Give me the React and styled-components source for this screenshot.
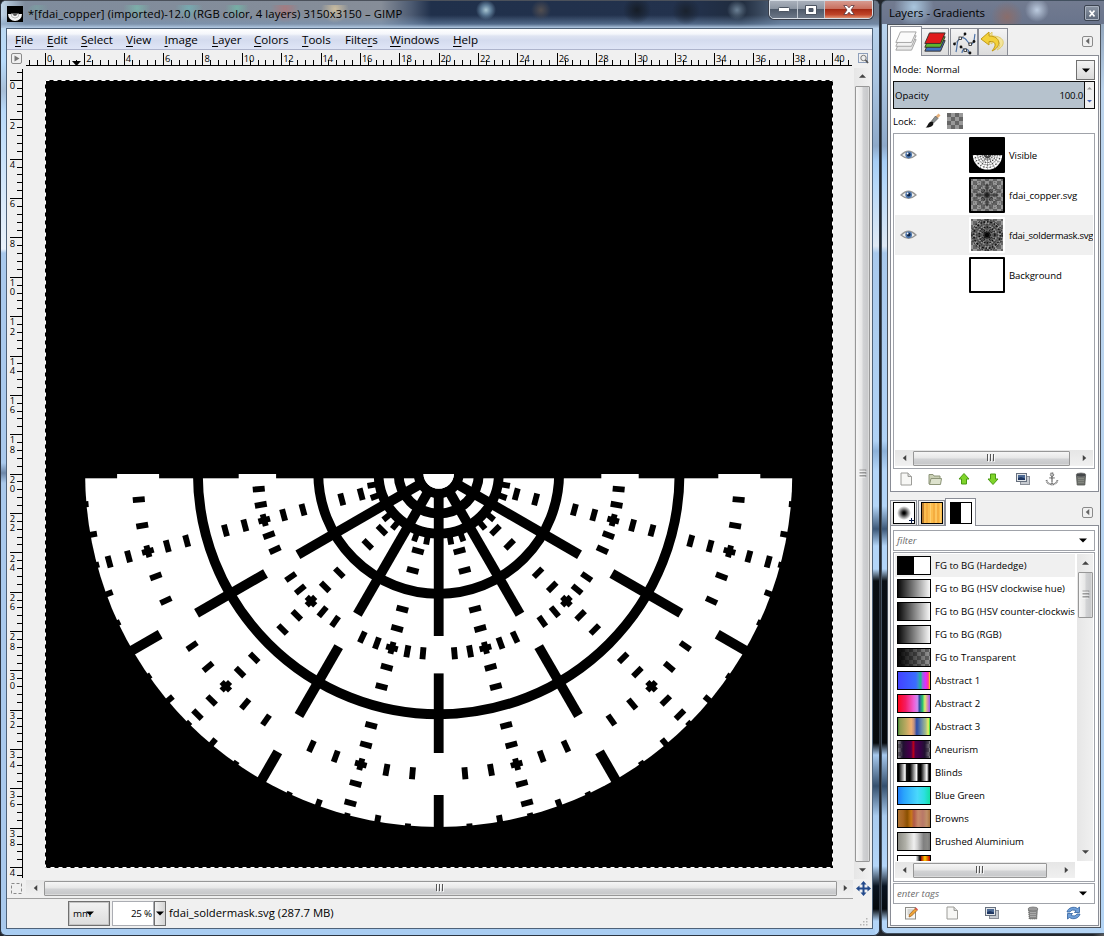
import React from "react";
import styled, { createGlobalStyle } from "styled-components";

const Global = createGlobalStyle`
  * { box-sizing: border-box; }
  html, body { margin: 0; padding: 0; }
  body {
    width: 1104px; height: 936px; overflow: hidden; background: #15171d;
    font-family: "Open Sans", "Noto Sans", sans-serif; color: #000;
  }
  svg { display: block; flex: none; }
`;

const Desktop = styled.div`
  display: flex;
  width: 1104px;
  height: 936px;
  gap: 1px;
  background: linear-gradient(90deg, #22262c 0 99%, #5b5b5b);
`;

/* ---------- window shells ---------- */

const glassSide = `linear-gradient(180deg, #77869c 0, #b8d2ec 24px, #a9c4e0 80px, #8ea9c9 145px, #a6cdf5 160px,
  #b7d8f8 185px, #dfe9f4 245px, #a9c9ec 252px, #b0d2f5 440px, #8db1d8 450px, #b3d5f8 470px, #b3d5f8 505px,
  #3d5878 528px, #b3d5f8 545px, #b3d5f8 568px, #0a0f14 580px, #070a0d 742px, #a7c9ee 754px, #35506e 785px,
  #a9cbee 815px, #b3d5f8 865px, #0a1420 885px, #05090d 908px, #b3d5f8 920px, #b3d5f8 936px)`;

const MainWindow = styled.div`
  width: 880px;
  height: 936px;
  padding: 0 6px 6px 5px;
  border: 1px solid #2c3440;
  border-top-color: #4b515b;
  border-radius: 6px;
  display: flex;
  flex-direction: column;
  background:
    linear-gradient(90deg, #a9cdf2 0 874px, transparent 874px) 0 928px / 100% 7px no-repeat,
    linear-gradient(180deg, #bcd5ec, #b9dcfb 60px, #a8bfd8 90px, #b9dafa 110px, #eaf2fa 248px, #a9c9ec 252px 462px,
      #6d87a8 472px, #a9c9ec 482px) 0 0 / 6px 100% no-repeat,
    ${glassSide} 100% 0 / 7px 100% no-repeat,
    #a9cdf2;
`;

const TitleBar = styled.div`
  height: 27px;
  flex: none;
  margin: 0 -6px 0 -5px;
  padding-left: 6px;
  border-radius: 5px 5px 0 0;
  display: flex;
  align-items: flex-start;
  background:
    radial-gradient(circle at 485px 9px, #a9c6d3 0, #5d7b96 5px, transparent 10px),
    radial-gradient(circle at 736px 9px, #6b8094 0, transparent 10px),
    radial-gradient(circle at 540px 9px, #524e50 0, transparent 10px),
    radial-gradient(circle at 636px 9px, #161d27 0, transparent 14px),
    radial-gradient(circle at 685px 10px, #1a222e 0, transparent 14px),
    linear-gradient(180deg, transparent 14px, rgba(120, 150, 185, 0.55) 23px, #b4cbe4 27px),
    linear-gradient(90deg, #c0d5e8 0, #7f8c9d 24px, #868d98 380px, #4d5b72 410px, #20304b 430px, #23324d 690px,
      #1f2b3d 740px, #55677f 780px, #6a7688 100%);
`;

const AppIcon = styled.svg`
  margin: 5px 0 0 0;
`;

const TitleText = styled.div`
  margin: 4px 0 0 4px;
  padding: 0 4px 0 1px;
  height: 18px;
  line-height: 17px;
  font-size: 11.3px;
  letter-spacing: 0.09px;
  white-space: pre;
  border-radius: 8px;
  background:
    radial-gradient(circle at 10px 3px, rgba(120, 170, 165, 0.5), transparent 12px),
    radial-gradient(circle at 110px 3px, rgba(120, 190, 175, 0.7), transparent 14px),
    radial-gradient(circle at 162px 3px, rgba(110, 190, 190, 0.6), transparent 14px),
    radial-gradient(circle at 210px 3px, rgba(110, 190, 170, 0.7), transparent 12px),
    radial-gradient(circle at 258px 4px, rgba(190, 110, 110, 0.6), transparent 14px),
    radial-gradient(circle at 308px 4px, rgba(220, 200, 160, 0.8), transparent 14px);
`;

const Controls = styled.div`
  display: flex;
  margin: -1px 6px 0 auto;
  width: 104px;
  height: 19px;
  border: 1px solid #d9dfe6;
  border-radius: 0 0 5px 5px;
  overflow: hidden;
  box-shadow: 0 0 0 1px #3a3f4b;
`;

const Control = styled.div`
  width: ${(p) => p.$w}px;
  height: 100%;
  display: flex;
  align-items: center;
  justify-content: center;
  border-right: ${(p) => (p.$close ? "none" : "1px solid #c0c6cf")};
  background: ${(p) =>
    p.$close
      ? "linear-gradient(180deg,#d79b90 0,#c9705f 45%,#a52a14 50%,#c0452a 80%,#e09070 100%)"
      : "linear-gradient(180deg,#a9b0bb 0,#8d96a3 45%,#4f5a6a 50%,#6b7686 100%)"};
`;

const Frame = styled.div`
  width: 867px;
  height: 901px;
  flex: none;
  border: 1px solid #4e6279;
  background: #f0f0f0;
  display: flex;
  flex-direction: column;
`;

const MenuBar = styled.div`
  display: flex;
  height: 21px;
  padding: 1px 0 0 8px;
  border-bottom: 1px solid #aeb4cc;
  background: linear-gradient(180deg, #fff 0, #f4f6fb 5px, #dfe4f2 7px, #d4dbee 11px, #dfe5f6 20px);
`;

const MenuItem = styled.div`
  width: ${(p) => p.$w}px;
  font-size: 11.6px;
  line-height: 19px;
  white-space: nowrap;
  u { text-underline-offset: 2px; text-decoration-thickness: 1px; }
`;

const Workspace = styled.div`
  display: grid;
  grid-template-columns: 19px 828px 18px;
  grid-template-rows: 16px 814px 17px;
`;

const Cell = styled.div`
  display: flex;
  align-items: center;
  justify-content: ${(p) => (p.$start ? "flex-start" : "center")};
`;

const CanvasArea = styled.div`
  padding: 14px 0 0 19px;
  background: #f0f0f0;
`;

/* ---------- scrollbars ---------- */

const Scroll = styled.div`
  display: flex;
  flex-direction: ${(p) => (p.$v ? "column" : "row")};
  align-items: center;
  width: ${(p) => (p.$v ? "16px" : `${p.$len}px`)};
  height: ${(p) => (p.$v ? `${p.$len}px` : "16px")};
  flex: none;
  background: ${(p) => (p.$v ? "linear-gradient(90deg,#e6e6e6,#f0f0f0)" : "linear-gradient(180deg,#e6e6e6,#f0f0f0)")};
`;

const ScrollEnd = styled.div`
  flex: none;
  width: ${(p) => (p.$v ? 16 : p.$s)}px;
  height: ${(p) => (p.$v ? p.$s : 16)}px;
  display: flex;
  align-items: center;
  justify-content: center;
  &:last-child { ${(p) => (p.$v ? "margin-top" : "margin-left")}: auto; }
`;

const Thumb = styled.div`
  flex: none;
  width: ${(p) => (p.$v ? 15 : p.$s)}px;
  height: ${(p) => (p.$v ? p.$s : 15)}px;
  border: 1px solid #979797;
  border-radius: 1px;
  display: flex;
  align-items: center;
  justify-content: center;
  background: ${(p) => (p.$v ? "linear-gradient(90deg" : "linear-gradient(180deg")},
    #f6f6f6 0, #e6e6e6 48%, #d2d3d5 52%, #c8c9cb 88%, #e2e2e2 100%);
`;

const Grip = () => (
  <svg width="9" height="8" viewBox="0 0 9 8">
    {[0.5, 3.5, 6.5].map((x) => (
      <g key={x}>
        <path d={`M${x} 0V7`} stroke="#555" />
        <path d={`M${x + 1} 1V8`} stroke="#fff" opacity="0.8" />
      </g>
    ))}
  </svg>
);
const GripTurn = styled.div`
  transform: rotate(90deg);
`;

const arrows = { l: "M6 0V7L2 3.5Z", r: "M2 0V7L6 3.5Z", u: "M0 5.5H8L4 1.5Z", d: "M0 1.5H8L4 5.5Z" };
const Arrow = ({ dir, fill = "#444", s = 8 }) => (
  <svg width={s} height={(s * 7) / 8} viewBox="0 0 8 7">
    <path d={arrows[dir]} fill={fill} />
  </svg>
);

const ScrollBar = ({ v, len, start, thumb, end }) => (
  <Scroll $v={v} $len={len}>
    <ScrollEnd $v={v} $s={start}><Arrow dir={v ? "u" : "l"} s={7} /></ScrollEnd>
    <Thumb $v={v} $s={thumb}>{v ? <GripTurn><Grip /></GripTurn> : <Grip />}</Thumb>
    <ScrollEnd $v={v} $s={end}><Arrow dir={v ? "d" : "r"} s={7} /></ScrollEnd>
  </Scroll>
);

/* ---------- rulers ---------- */

const STEP = 19.68;
const minor = Array.from({ length: 110 }, (_, i) => i);

const HRuler = () => (
  <svg width="828" height="16" viewBox="26 50 828 16" fontFamily="Open Sans" fontSize="9.4">
    <path d="M26 65.5H852" stroke="#000" />
    {minor.map((i) => {
      const x = Math.floor(45.5 + (i - 2) * STEP * 0.4) + 0.5;
      const big = (i - 2) % 5 === 0;
      return x < 852 ? <path key={i} d={`M${x} ${big ? 53 : 60}V65`} stroke="#000" /> : null;
    })}
    {Array.from({ length: 21 }, (_, k) => (
      <text key={k} x={47 + k * STEP * 2} y="62.3" letterSpacing="-0.2">{k * 2}</text>
    ))}
    <path d="M72 61H81L76.500 66Z" />
  </svg>
);

const VRuler = () => (
  <svg width="19" height="814" viewBox="7 66 19 814" fontFamily="Open Sans" fontSize="9.4">
    <path d="M22.500 69V878" stroke="#000" />
    {minor.map((i) => {
      const y = Math.floor(80.5 + (i - 1) * STEP * 0.4) + 0.5;
      const big = (i - 1) % 5 === 0;
      return y < 878 ? <path key={i} d={`M${big ? 10 : 17} ${y}H22`} stroke="#000" /> : null;
    })}
    {Array.from({ length: 21 }, (_, k) =>
      String(k * 2).split("").map((c, j) => (
        <text key={`${k}-${j}`} x="9.7" y={89.2 + k * STEP * 2 + j * 9.3}>{c}</text>
      ))
    )}
    <rect x="7" y="879" width="15" height="2" fill="#f0f0f0" />
  </svg>
);

/* ---------- radial artwork ---------- */

const PITCH = 20.07;
const Dash = ({ a, r, w, h }) => (
  <rect x={r - w / 2} y={-h / 2} width={w} height={h} transform={`rotate(${a})`} />
);

const Wheel = ({ sectors = 6, ink = "#000", paper = "#fff" }) => {
  const spokes = Array.from({ length: sectors === 6 ? 7 : 12 }, (_, i) => i * 30);
  const mids = Array.from({ length: sectors }, (_, i) => i * 30 + 15);
  return (
    <g>
      <circle r="353.6" fill={paper} />
      <g fill="none" stroke={ink} strokeWidth="9.8">
        {[1, 2, 3, 6, 12].map((n) => <circle key={n} r={n * PITCH} />)}
      </g>
      <g fill={ink}>
        {spokes.map((a) => (
          <g key={a} transform={`rotate(${a})`}>
            <rect x="16" y="-4.9" width="146.600" height="9.8" />
            <rect x="200" y="-4.9" width="79.600" height="9.8" />
            <rect x="321.600" y="-4.9" width="34" height="9.8" />
          </g>
        ))}
        {mids.map((m) => (
          <g key={m}>
            {[4, 5, 7, 8, 9, 10, 11, 13, 14, 15, 16, 17].map((n) => (
              <Dash key={n} a={m} r={n * PITCH} w={5.9} h={12} />
            ))}
            {[-10, -5, 0, 5, 10].map((d) => (
              <g key={d}>
                <Dash a={m + d} r={9 * PITCH} w={12} h={5.9} />
                <Dash a={m + d} r={15 * PITCH} w={12} h={5.9} />
                <Dash a={m + d} r={Math.abs(d) === 5 ? 353 : 357.5} w={12} h={5.9} />
              </g>
            ))}
            <Dash a={m - 5} r={66.300} w={12} h={5.9} />
            <Dash a={m + 5} r={66.300} w={12} h={5.9} />
          </g>
        ))}
      </g>
      <circle r="15.300" fill={paper} />
    </g>
  );
};

const Artwork = () => (
  <svg width="788" height="788" viewBox="45 80 788 788">
    <defs>
      <clipPath id="half"><rect x="45" y="474" width="788" height="390" /></clipPath>
    </defs>
    <rect x="45" y="80" width="788" height="788" fill="#000" />
    <g clipPath="url(#half)">
      <g transform="translate(438.7 473.4)"><Wheel /></g>
    </g>
    <rect x="45.5" y="80.5" width="787" height="787" fill="none" stroke="#fff" strokeDasharray="4 4" />
  </svg>
);

/* ---------- status bar ---------- */

const StatusBar = styled.div`
  height: 31px;
  width: 846px;
  border-top: 1px solid #a0a0a0;
  margin-top: 1px;
  padding: 2px 0 0 61px;
  display: flex;
`;
const StatusRow = styled.div`
  display: flex;
  justify-content: space-between;
  align-items: flex-end;
`;
const UnitBox = styled.div`
  width: 42px;
  height: 25px;
  border: 1px solid #707070;
  box-shadow: inset 0 0 0 1px #c4c4c4;
  background: linear-gradient(180deg, #f2f2f2, #ddd);
  display: flex;
  align-items: center;
  padding-left: 4px;
  font-size: 9.8px;
  svg { margin-left: -5px; }
`;
const ZoomBox = styled.div`
  width: 42px;
  height: 25px;
  margin-left: 2px;
  border: 1px solid #abadb3;
  background: #fff;
  font-size: 9.8px;
  letter-spacing: -0.2px;
  line-height: 24px;
  padding-right: 1px;
  text-align: right;
`;
const ZoomDrop = styled.div`
  width: 12px;
  height: 25px;
  border: 1px solid #707070;
  background: linear-gradient(90deg, #f2f2f2, #d4d4d4);
  display: flex;
  align-items: center;
  justify-content: center;
`;
const StatusText = styled.div`
  margin-left: 3px;
  font-size: 11.3px;
  line-height: 24px;
  white-space: nowrap;
`;
const SizeGrip = styled.div`
  padding: 0 4px 3px 0;
`;

/* ---------- dock window ---------- */

const DockWindow = styled.div`
  width: 223px;
  height: 934px;
  padding: 0 4px 0 5px;
  border: 1px solid #42505f;
  border-right: none;
  border-radius: 6px 0 0 6px;
  background: ${glassSide} 0 0 / 5px 100% no-repeat, linear-gradient(180deg, #8496ac, #bcd4ec 90px, #b4d4f4);
`;
const DockTitle = styled.div`
  height: 23px;
  margin: 0 -4px 0 -5px;
  padding: 4px 4px 0 7px;
  display: flex;
  justify-content: space-between;
  background:
    radial-gradient(circle at 155px 9px, #bccbdf 0, transparent 12px),
    radial-gradient(circle at 32px 6px, #a9c6de 0, transparent 20px),
    radial-gradient(circle at 125px 16px, #8a6d6b 0, transparent 16px),
    linear-gradient(180deg, #727b90, #69748c);
  border-radius: 5px 0 0 0;
`;
const DockTitleText = styled.div`
  font-size: 11.4px;
  line-height: 16px;
  white-space: nowrap;
`;
const DockClose = styled.div`
  width: 16px;
  height: 16px;
  border: 1px solid #3b4350;
  box-shadow: inset 0 0 0 1px #a8b1bf;
  border-radius: 2px;
  background: linear-gradient(180deg, #8d97a6, #5b6678);
  display: flex;
  align-items: center;
  justify-content: center;
`;
const DockFrame = styled.div`
  width: 214px;
  height: 904px;
  border: 1px solid #4c545e;
  background: #f0f0f0;
  padding: 1px 1px 0 2px;
`;
const TabRow = styled.div`
  display: flex;
  align-items: flex-end;
  height: ${(p) => p.$h}px;
`;
const Tab = styled.div`
  width: ${(p) => p.$w}px;
  height: ${(p) => p.$h}px;
  margin-right: ${(p) => p.$mr || 0}px;
  flex: none;
  border: 1px solid #898c95;
  border-bottom: none;
  background: ${(p) => (p.$active ? "#fff" : "linear-gradient(180deg,#f4f4f4,#dcdcdc)")};
  display: flex;
  align-items: center;
  justify-content: center;
  ${(p) => p.$active && "margin-bottom:-1px; position:relative; z-index:1;"}
`;
const MenuButton = styled.div`
  width: 11px;
  height: 11px;
  border: 1px solid #8a8a8a;
  border-radius: 2px;
  margin: 0 6px ${(p) => p.$mb}px auto;
  display: flex;
  align-items: center;
  justify-content: center;
`;
const Panel = styled.div`
  width: 209px;
  height: ${(p) => p.$h}px;
  border: 1px solid #898c95;
  background: #fff;
  padding: 4px 3px 0 2px;
  font-size: 9.6px;
`;
const ModeRow = styled.div`
  display: flex;
  justify-content: space-between;
  height: 21px;
  line-height: 20px;
  white-space: pre;
`;
const DropButton = styled.div`
  width: 19px;
  height: 20px;
  border: 1px solid #707070;
  background: linear-gradient(180deg, #f4f4f4, #dadada);
  display: flex;
  align-items: center;
  justify-content: center;
`;
const Opacity = styled.div`
  height: 28px;
  width: 202px;
  border: 1px solid #111;
  background: #b6c2cd;
  display: flex;
  justify-content: space-between;
  line-height: 27px;
  padding-left: 1px;
`;
const Spin = styled.div`
  display: flex;
  width: 73px;
  justify-content: flex-end;
  letter-spacing: -0.2px;
`;
const SpinButtons = styled.div`
  width: 10px;
  height: 26px;
  margin-left: 1px;
  border-left: 1px solid #111;
  background: #f0f0f0;
  display: flex;
  flex-direction: column;
  align-items: center;
  justify-content: space-around;
`;
const LockRow = styled.div`
  display: flex;
  align-items: center;
  height: 24px;
  svg { margin-left: 9px; }
  svg + svg { margin-left: 6px; }
`;
const ListBox = styled.div`
  width: 202px;
  height: ${(p) => p.$h}px;
  border: 1px solid #a0a3aa;
  padding: ${(p) => p.$pt || 0}px 1px 0;
`;
const LayerRow = styled.div`
  display: flex;
  align-items: center;
  height: 40px;
  width: 198px;
  overflow: hidden;
  background: ${(p) => (p.$selected ? "#f0f0f0" : "#fff")};
  white-space: nowrap;
`;
const EyeSlot = styled.div`
  width: 74px;
  flex: none;
  padding-left: 5px;
`;
const LayerName = styled.div`
  margin-left: 4px;
  letter-spacing: ${(p) => (p.$tight ? -0.3 : -0.1)}px;
`;
const Filler = styled.div`
  height: ${(p) => p.$h}px;
`;
const ToolRow = styled.div`
  display: flex;
  justify-content: space-between;
  padding: ${(p) => p.$p};
`;
const Entry = styled.div`
  width: 202px;
  height: 21px;
  margin-bottom: ${(p) => p.$mb || 0}px;
  border: 1px solid #a0a3aa;
  padding: 0 7px 0 3px;
  display: flex;
  align-items: center;
  justify-content: space-between;
  font-style: italic;
  color: #6d6d6d;
`;
const GradBody = styled.div`
  display: flex;
  height: 308px;
  justify-content: space-between;
`;
const GradList = styled.div`
  width: 180px;
  height: 307px;
  overflow: hidden;
`;
const GradRow = styled.div`
  display: flex;
  align-items: center;
  height: 23px;
  padding-left: 2px;
  white-space: nowrap;
  background: ${(p) => (p.$selected ? "#f0f0f0" : "#fff")};
`;
const Swatch = styled.div`
  width: 34px;
  height: 19px;
  margin-right: 4px;
  flex: none;
  border: 1px solid #000;
  background: ${(p) => p.$bg};
  background-origin: border-box;
`;

/* ---------- icons ---------- */

const Checker = ({ id, a = "#666", b = "#999", s = 4 }) => (
  <pattern id={id} width={s * 2} height={s * 2} patternUnits="userSpaceOnUse">
    <rect width={s * 2} height={s * 2} fill={b} />
    <path d={`M0 0H${s}V${s}H0ZM${s} ${s}H${s * 2}V${s * 2}H${s}Z`} fill={a} />
  </pattern>
);

const Eye = () => (
  <svg width="17" height="12" viewBox="0 0 17 12">
    <path d="M1 6Q8.500 -1.500 16 6Q8.500 12.500 1 6Z" fill="#f3f3f0" stroke="#969696" strokeWidth="1.300" />
    <circle cx="8.700" cy="5.800" r="3.400" fill="#4c76ad" />
    <circle cx="8.700" cy="5.600" r="1.900" fill="#0d2346" />
    <circle cx="7.600" cy="4.500" r="0.900" fill="#fff" />
  </svg>
);

const Thumbnail = ({ kind }) => (
  <svg width="36" height="36" viewBox="0 0 36 36">
    <defs>
      <Checker id={`chk-${kind}`} />
      <clipPath id="thumbHalf"><rect x="-400" y="0" width="800" height="400" /></clipPath>
    </defs>
    <rect width="36" height="36" rx="1" fill={kind === "mask" ? "#fff" : "#000"} />
    {kind === "white" && <rect x="2" y="2" width="32" height="32" fill="#fff" />}
    {kind === "copper" && (
      <g>
        <rect x="2" y="2" width="32" height="32" fill="url(#chk-copper)" />
        <g transform="translate(18 18) scale(0.043)" opacity="0.75"><Wheel sectors={12} paper="none" /></g>
        <path d="M18 7V29M7 18H29" stroke="#000" strokeWidth="0.8" opacity="0.6" />
      </g>
    )}
    {kind === "mask" && (
      <g>
        <rect x="2" y="2" width="32" height="32" fill="url(#chk-mask)" />
        <g transform="translate(18 18) scale(0.044)">
          <Wheel sectors={12} paper="none" />
          <g fill="none" stroke="#000" opacity="0.8">
            <circle r="75" strokeWidth="26" strokeDasharray="28 12" />
            <circle r="180" strokeWidth="34" strokeDasharray="34 30" />
            <circle r="300" strokeWidth="38" strokeDasharray="38 40" />
            <circle r="345" strokeWidth="22" strokeDasharray="40 30" />
          </g>
          <circle r="50" opacity="0.8" />
        </g>
      </g>
    )}
    {kind === "visible" && (
      <g transform="translate(18.500 18) scale(0.0415)" clipPath="url(#thumbHalf)">
        <Wheel />
        <g fill="none" stroke="#000" opacity="0.75">
          <circle r="70" strokeWidth="24" strokeDasharray="26 12" />
          <circle r="180" strokeWidth="26" strokeDasharray="28 36" />
          <circle r="300" strokeWidth="26" strokeDasharray="28 50" />
        </g>
      </g>
    )}
  </svg>
);

const LayersIcon = ({ colors, stroke }) => (
  <svg width="24" height="23" viewBox="0 0 26 24" preserveAspectRatio="none">
    {[2, 1, 0].map((i) => (
      <path key={i} d={`M7 ${2 + i * 4}H24L19 ${13 + i * 4}H2Z`} fill={colors[i]} stroke={stroke} strokeWidth="1" />
    ))}
  </svg>
);
const PathsIcon = () => (
  <svg width="25" height="25" viewBox="0 0 25 25" fill="none">
    <path d="M4 22C6 14 4 10 9 8M9 8C15 5 15 16 20 14C23 12 22 8 23 4M10 23C10 17 18 18 17 24" stroke="#4d73a8" strokeWidth="1.200" />
    <path d="M2 14L14 4M16 14L22 12M8 16L18 24" stroke="#555" strokeWidth="0.700" />
    <g fill="#111"><circle cx="2.500" cy="14" r="1.400" /><circle cx="13" cy="4" r="1.400" /><circle cx="22" cy="11.500" r="1.400" /><circle cx="9" cy="17" r="1.400" /><circle cx="18" cy="23" r="1.400" /></g>
    <g fill="#fff" stroke="#222" strokeWidth="0.800"><rect x="7" y="7" width="2.500" height="2.500" /><rect x="17" y="13" width="2.500" height="2.500" /><rect x="12" y="19" width="2.500" height="2.500" /></g>
  </svg>
);
const UndoIcon = () => (
  <svg width="26" height="24" viewBox="0 0 26 24">
    <path d="M12 2L5 9L12 14V11C20 10 22 14 17 20C26 16 26 6 12 6Z" fill="#f4e59a" stroke="#e0cb6a" />
    <path d="M9 2L1 9L9 15V11.500C16 11 17 15 12 21C22 17 21 6 9 6Z" fill="#f3d13a" stroke="#c29a16" />
  </svg>
);
const BrushIcon = () => (
  <svg width="16" height="16" viewBox="0 0 16 16">
    <path d="M10 4L13.500 0.500L15.500 2.500L12 6Z" fill="#e8b27c" />
    <path d="M6.500 8L10.500 3L13 5.500L8.500 10Z" fill="#8a8f8f" stroke="#555" strokeWidth="0.600" />
    <path d="M0.500 14.500C3 13.500 3 9 6.500 8.500C9.500 9 9 13 5 14C3 14.600 2 14.600 0.500 14.500Z" fill="#141414" />
  </svg>
);
const PageIcon = () => (
  <svg width="14" height="14" viewBox="0 0 14 14">
    <path d="M2 1H9L12.500 4.500V13H2Z" fill="#f7f7f5" stroke="#9c9c98" /><path d="M9 1V4.500H12.500" fill="#ddd" stroke="#9c9c98" />
  </svg>
);
const FolderIcon = () => (
  <svg width="14" height="14" viewBox="0 0 14 14">
    <path d="M1 2.500H5L6 4H12V12H1Z" fill="#c9cfb4" stroke="#8d9579" /><path d="M3 6.500H13.500L12.500 12.500H1.500Z" fill="#dde2cd" stroke="#8d9579" />
  </svg>
);
const GreenArrow = ({ down }) => (
  <svg width="14" height="14" viewBox="0 0 14 14">
    <path d="M7 1.500L12 7H9.500V12H4.500V7H2Z" transform={down ? "rotate(180 7 7)" : undefined} fill="#7fd42a" stroke="#4a9a12" />
  </svg>
);
const DuplicateIcon = () => (
  <svg width="14" height="14" viewBox="0 0 14 14">
    <rect x="4.500" y="4.500" width="9" height="8" fill="#c5c9cf" stroke="#8a8f98" />
    <rect x="0.500" y="1.500" width="10" height="8" fill="#e4e7ea" stroke="#67707e" />
    <rect x="2" y="3" width="7" height="5" fill="#4c6994" /><path d="M2 8V6L5 5L9 6.500V8Z" fill="#1f3763" />
  </svg>
);
const AnchorIcon = () => (
  <svg width="14" height="14" viewBox="0 0 14 14" fill="none" stroke="#777" strokeDasharray="1 0.4" strokeWidth="1.800">
    <circle cx="7" cy="2.500" r="1.300" /><path d="M7 4V12M4.500 5.800H9.500M1.500 8C2 11 4 12 7 12.500C10 12 12 11 12.500 8" />
  </svg>
);
const TrashIcon = ({ dim }) => (
  <svg width="14" height="14" viewBox="0 0 14 14">
    <path d="M2.500 3.500H11.500L10.800 13H3.200Z" fill={dim ? "#888" : "#70736e"} stroke="#4e504c" strokeWidth="0.800" strokeDasharray={dim ? "1 1" : "none"} />
    <ellipse cx="7" cy="3" rx="5" ry="2" fill={dim ? "#999" : "#45484a"} stroke="#777" strokeWidth="0.800" />
    <path d="M5 6V12M7 6V12M9 6V12" stroke={dim ? "#ddd" : "#a4a8a0"} strokeWidth="0.800" strokeDasharray="1 1" />
  </svg>
);
const EditIcon = () => (
  <svg width="14" height="14" viewBox="0 0 14 14">
    <rect x="1.500" y="1.500" width="10" height="11.500" fill="#f7f7f5" stroke="#8d8d88" />
    <path d="M3.500 4H9M3.500 6H8M3.500 8H6" stroke="#b5b5b0" />
    <path d="M5 11L5.500 8.500L11 2.500L13 4.500L7.500 10Z" fill="#efa437" stroke="#9a5a1a" strokeWidth="0.700" />
    <path d="M11 2.500L12 1.500L14 3.500L13 4.500Z" fill="#d94a4a" />
  </svg>
);
const RefreshIcon = () => (
  <svg width="15" height="14" viewBox="0 0 15 14" fill="#6f9fd8" stroke="#2e5f9e" strokeWidth="0.800">
    <path d="M1 6C2 1.500 8 0 11.500 2.500L13.500 1V6.500H8.500L10 4.800C7.500 3.500 5 4 4 6Z" />
    <path d="M14 8C13 12.500 7 14 3.500 11.500L1.500 13V7.500H6.500L5 9.200C7.500 10.500 10 10 11 8Z" />
  </svg>
);
const BrushTab = () => (
  <svg width="22" height="22" viewBox="0 0 22 22">
    <defs><radialGradient id="soft"><stop offset="0.15" stopColor="#000" /><stop offset="0.6" stopColor="#888" /><stop offset="1" stopColor="#fff" /></radialGradient></defs>
    <rect x="0.500" y="0.500" width="21" height="21" fill="#fff" stroke="#000" />
    <circle cx="11" cy="11" r="7" fill="url(#soft)" />
    <path d="M18.500 16V21M16 18.500H21" stroke="#0a1a4a" />
  </svg>
);
const PatternTab = () => (
  <svg width="22" height="22" viewBox="0 0 22 22">
    <rect x="0.500" y="0.500" width="21" height="21" fill="#fbbd4e" stroke="#000" />
    <path d="M2 1V21" stroke="#7b3d10" /><path d="M6 1V21M13 1V21M17 1V21" stroke="#ee9d33" /><path d="M9.500 1V21M15 1V21M19.500 1V21" stroke="#ffcf70" />
  </svg>
);
const GradientTab = () => (
  <svg width="22" height="22" viewBox="0 0 22 22">
    <rect x="0.500" y="0.500" width="21" height="21" fill="#fff" stroke="#000" /><rect width="11" height="22" />
  </svg>
);

/* ---------- data ---------- */

const menus = [
  ["", "F", "ile", 32], ["", "E", "dit", 34], ["", "S", "elect", 45], ["", "V", "iew", 38.5], ["", "I", "mage", 47.5],
  ["", "L", "ayer", 42], ["", "C", "olors", 48], ["", "T", "ools", 43], ["Filte", "r", "s", 45], ["", "W", "indows", 63],
  ["", "H", "elp", 40],
];

const layers = [
  { name: "Visible", kind: "visible", eye: true },
  { name: "fdai_copper.svg", kind: "copper", eye: true },
  { name: "fdai_soldermask.svg", kind: "mask", eye: true, selected: true },
  { name: "Background", kind: "white" },
];

const chk = "repeating-conic-gradient(#666 0 25%, #999 0 50%) 0 0 / 8px 8px";
const gradients = [
  ["FG to BG (Hardedge)", "linear-gradient(90deg,#000 50%,#fff 50%)"],
  ["FG to BG (HSV clockwise hue)", "linear-gradient(90deg,#000,#fff)"],
  ["FG to BG (HSV counter-clockwise hue)", "linear-gradient(90deg,#000,#fff)"],
  ["FG to BG (RGB)", "linear-gradient(90deg,#000,#fff)"],
  ["FG to Transparent", `linear-gradient(90deg,#000,transparent), ${chk}`],
  ["Abstract 1", "linear-gradient(90deg,#4340ff,#3a6cff 55%,#3f8ad8 62%,#18c088 70%,#8f6ae0 75%,#e02cff 84%,#ff3a9a 92%,#ffe000 97%)"],
  ["Abstract 2", "linear-gradient(90deg,#f01,#f41c64 25%,#ef60d8 50%,#c98cf0 60%,#3050a0 66%,#2cc070 75%,#d8f070 82%,#e0a0a0 88%,#b060e0 95%,#4040ff)"],
  ["Abstract 3", "linear-gradient(90deg,#0a7a1c,#8a9a50 8%,#b8a860 25%,#f0b070 42%,#c09080 50%,#2c4ca8 58%,#6a8aa8 72%,#a8c088 85%,#f0f060 92%,#20d040 97%)"],
  ["Aneurism", `linear-gradient(90deg,transparent,#201030 18%,#400048 35%,#500048 42%,#c00018 48%,#500048 54%,#380048 68%,#201030 82%,transparent), ${chk}`],
  ["Blinds", "linear-gradient(90deg,#000 5%,#fff 24%,#111 28%,#000 38%,#fff 58%,#111 62%,#000 70%,#fff 88%,#000 94%)"],
  ["Blue Green", "linear-gradient(90deg,#1e78f8,#2aa4fc 20%,#4ad8fc 60%,#2ce0e0 80%,#10e09a)"],
  ["Browns", "linear-gradient(90deg,#b07838,#a86420 18%,#8a5000 30%,#c87818 42%,#b05848 50%,#c88a68 62%,#b87868 76%,#c09068 88%,#a06830)"],
  ["Brushed Aluminium", "linear-gradient(90deg,#888880,#b0b0a8 25%,#f0f0f0 50%,#d0d0d0 60%,#808080 78%,#8a8a88 90%,#707070)"],
  ["", "linear-gradient(90deg,#fff 55%,#000 68%,#b02000 72%,#ffd000 82%,#c01000 96%)"],
];

/* ---------- app ---------- */

export default function App() {
  return (
    <Desktop>
      <Global />
      <MainWindow>
        <TitleBar>
          <AppIcon width="16" height="16" viewBox="0 0 16 16">
            <rect width="16" height="16" />
            <path d="M1 8A7 7 0 0 0 15 8Z" fill="#f2f2f2" />
            <path d="M4 8A4 4 0 0 0 12 8Z" fill="none" stroke="#bbb" /><path d="M6 8A2 2 0 0 0 10 8Z" fill="#555" />
          </AppIcon>
          <TitleText>*[fdai_copper] (imported)-12.0 (RGB color, 4 layers) 3150x3150 – GIMP</TitleText>
          <Controls>
            <Control $w={28}>
              <svg width="12" height="5" viewBox="0 0 12 5"><rect x="0.500" y="0.500" width="11" height="4" rx="1" fill="#fff" stroke="#4d5562" /></svg>
            </Control>
            <Control $w={27}>
              <svg width="12" height="10" viewBox="0 0 12 10"><path fillRule="evenodd" d="M0.500 0.500H11.500V9.500H0.500ZM4 3.500V6.500H8V3.500Z" fill="#fff" stroke="#4d5562" /></svg>
            </Control>
            <Control $w={47} $close>
              <svg width="12" height="10" viewBox="0 0 12 10"><path d="M0.800 0.500H4L6 2.800L8 0.500H11.200L8 5L11.200 9.500H8L6 7.200L4 9.500H0.800L4 5Z" fill="#fff" stroke="#5a3b42" strokeWidth="0.800" /></svg>
            </Control>
          </Controls>
        </TitleBar>
        <Frame>
          <MenuBar>
            {menus.map(([a, u, b, w]) => (
              <MenuItem key={u + b} $w={w}>{a}<u>{u}</u>{b}</MenuItem>
            ))}
          </MenuBar>
          <Workspace>
            <Cell>
              <svg width="11" height="11" viewBox="0 0 11 11"><rect x="0.500" y="0.500" width="10" height="10" rx="1.500" fill="none" stroke="#8a8a8a" /><path d="M3.500 2.500L8.500 5.500L3.500 8.500Z" fill="#777" /></svg>
            </Cell>
            <HRuler />
            <Cell>
              <svg width="11" height="11" viewBox="0 0 11 11"><rect x="0.500" y="0.500" width="9" height="9" fill="none" stroke="#2d4f86" strokeDasharray="1 1" /><circle cx="5.500" cy="5" r="2.700" fill="#eee" stroke="#777" /><path d="M7.500 7L10 10" stroke="#555" strokeWidth="1.800" /></svg>
            </Cell>
            <VRuler />
            <CanvasArea><Artwork /></CanvasArea>
            <Cell $start><ScrollBar v len={811} start={18} thumb={776} end={17} /></Cell>
            <Cell>
              <svg width="11" height="11" viewBox="0 0 11 11"><rect x="0.500" y="0.500" width="10" height="10" fill="none" stroke="#8a8a8a" strokeDasharray="3 2" /></svg>
            </Cell>
            <ScrollBar len={827} start={18} thumb={793} end={16} />
            <Cell>
              <svg width="15" height="15" viewBox="0 0 15 15" fill="#234a8c"><path d="M7.500 0L10.500 3.500H8.500V6.500H11.500V4.500L15 7.500L11.500 10.500V8.500H8.500V11.500H10.500L7.500 15L4.500 11.500H6.500V8.500H3.500V10.500L0 7.500L3.500 4.500V6.500H6.500V3.500H4.500Z" /></svg>
            </Cell>
          </Workspace>
          <StatusRow>
            <StatusBar>
              <UnitBox>mm<Arrow dir="d" fill="#000" s={8} /></UnitBox>
              <ZoomBox>25 %</ZoomBox>
              <ZoomDrop><Arrow dir="d" fill="#000" s={8} /></ZoomDrop>
              <StatusText>fdai_soldermask.svg (287.7 MB)</StatusText>
            </StatusBar>
            <SizeGrip>
              <svg width="9" height="9" viewBox="0 0 9 9" fill="#b5b5b5">
                {[[7, 1], [4, 4], [7, 4], [1, 7], [4, 7], [7, 7]].map(([x, y]) => <rect key={`${x}${y}`} x={x} y={y} width="1.500" height="1.500" />)}
              </svg>
            </SizeGrip>
          </StatusRow>
        </Frame>
      </MainWindow>

      <DockWindow>
        <DockTitle>
          <DockTitleText>Layers - Gradients</DockTitleText>
          <DockClose>
            <svg width="6" height="7" viewBox="0 0 6 7"><path d="M0.500 0.500L5.500 6.500M5.500 0.500L0.500 6.500" stroke="#fff" strokeWidth="1.600" /></svg>
          </DockClose>
        </DockTitle>
        <DockFrame>
          <TabRow $h={29}>
            <Tab $w={32} $h={30} $mr={-1} $active><LayersIcon colors={["#fafafa", "#f2f2f2", "#e8e8e8"]} stroke="#a2a2a2" /></Tab>
            <Tab $w={28} $h={27} $mr={1}><LayersIcon colors={["#e01b1b", "#5fb52f", "#3f74c4"]} stroke="#38302a" /></Tab>
            <Tab $w={28} $h={27}><PathsIcon /></Tab>
            <Tab $w={30} $h={27}><UndoIcon /></Tab>
            <MenuButton $mb={8}><Arrow dir="l" fill="#666" s={7} /></MenuButton>
          </TabRow>
          <Panel $h={437}>
            <ModeRow>Mode:  Normal<DropButton><Arrow dir="d" fill="#000" /></DropButton></ModeRow>
            <Opacity>
              Opacity
              <Spin>100.0<SpinButtons><Arrow dir="u" fill="#999" s={5} /><Arrow dir="d" fill="#4a66b4" s={5} /></SpinButtons></Spin>
            </Opacity>
            <LockRow>
              Lock:
              <BrushIcon />
              <svg width="16" height="16" viewBox="0 0 16 16"><defs><Checker id="lockchk" /></defs><rect width="16" height="16" fill="url(#lockchk)" /></svg>
            </LockRow>
            <ListBox $h={336} $pt={1}>
              {layers.map((l) => (
                <LayerRow key={l.name} $selected={l.selected}>
                  <EyeSlot>{l.eye && <Eye />}</EyeSlot>
                  <Thumbnail kind={l.kind} />
                  <LayerName $tight={l.selected}>{l.name}</LayerName>
                </LayerRow>
              ))}
              <Filler $h={155} />
              <ScrollBar len={198} start={18} thumb={157} end={18} />
            </ListBox>
            <ToolRow $p="3px 7px 0 6px">
              <PageIcon /><FolderIcon /><GreenArrow /><GreenArrow down /><DuplicateIcon /><AnchorIcon /><TrashIcon />
            </ToolRow>
          </Panel>
          <TabRow $h={33}>
            <Tab $w={27} $h={25} $mr={1}><BrushTab /></Tab>
            <Tab $w={27} $h={25}><PatternTab /></Tab>
            <Tab $w={31} $h={28} $active><GradientTab /></Tab>
            <MenuButton $mb={7}><Arrow dir="l" fill="#666" s={7} /></MenuButton>
          </TabRow>
          <Panel $h={401}>
            <Entry $mb={1}>filter<Arrow dir="d" fill="#000" /></Entry>
            <ListBox $h={330} $pt={1}>
              <GradBody>
                <GradList>
                  {gradients.map(([name, bg], i) => (
                    <GradRow key={i} $selected={i === 0}><Swatch $bg={bg} />{name}</GradRow>
                  ))}
                </GradList>
                <ScrollBar v len={307} start={18} thumb={46} end={18} />
              </GradBody>
              <ScrollBar len={180} start={18} thumb={134} end={18} />
            </ListBox>
            <Filler $h={1} />
            <Entry>enter tags<Arrow dir="d" fill="#000" /></Entry>
            <ToolRow $p="2px 14px 0 11px">
              <EditIcon /><PageIcon /><DuplicateIcon /><TrashIcon dim /><RefreshIcon />
            </ToolRow>
          </Panel>
        </DockFrame>
      </DockWindow>
    </Desktop>
  );
}
